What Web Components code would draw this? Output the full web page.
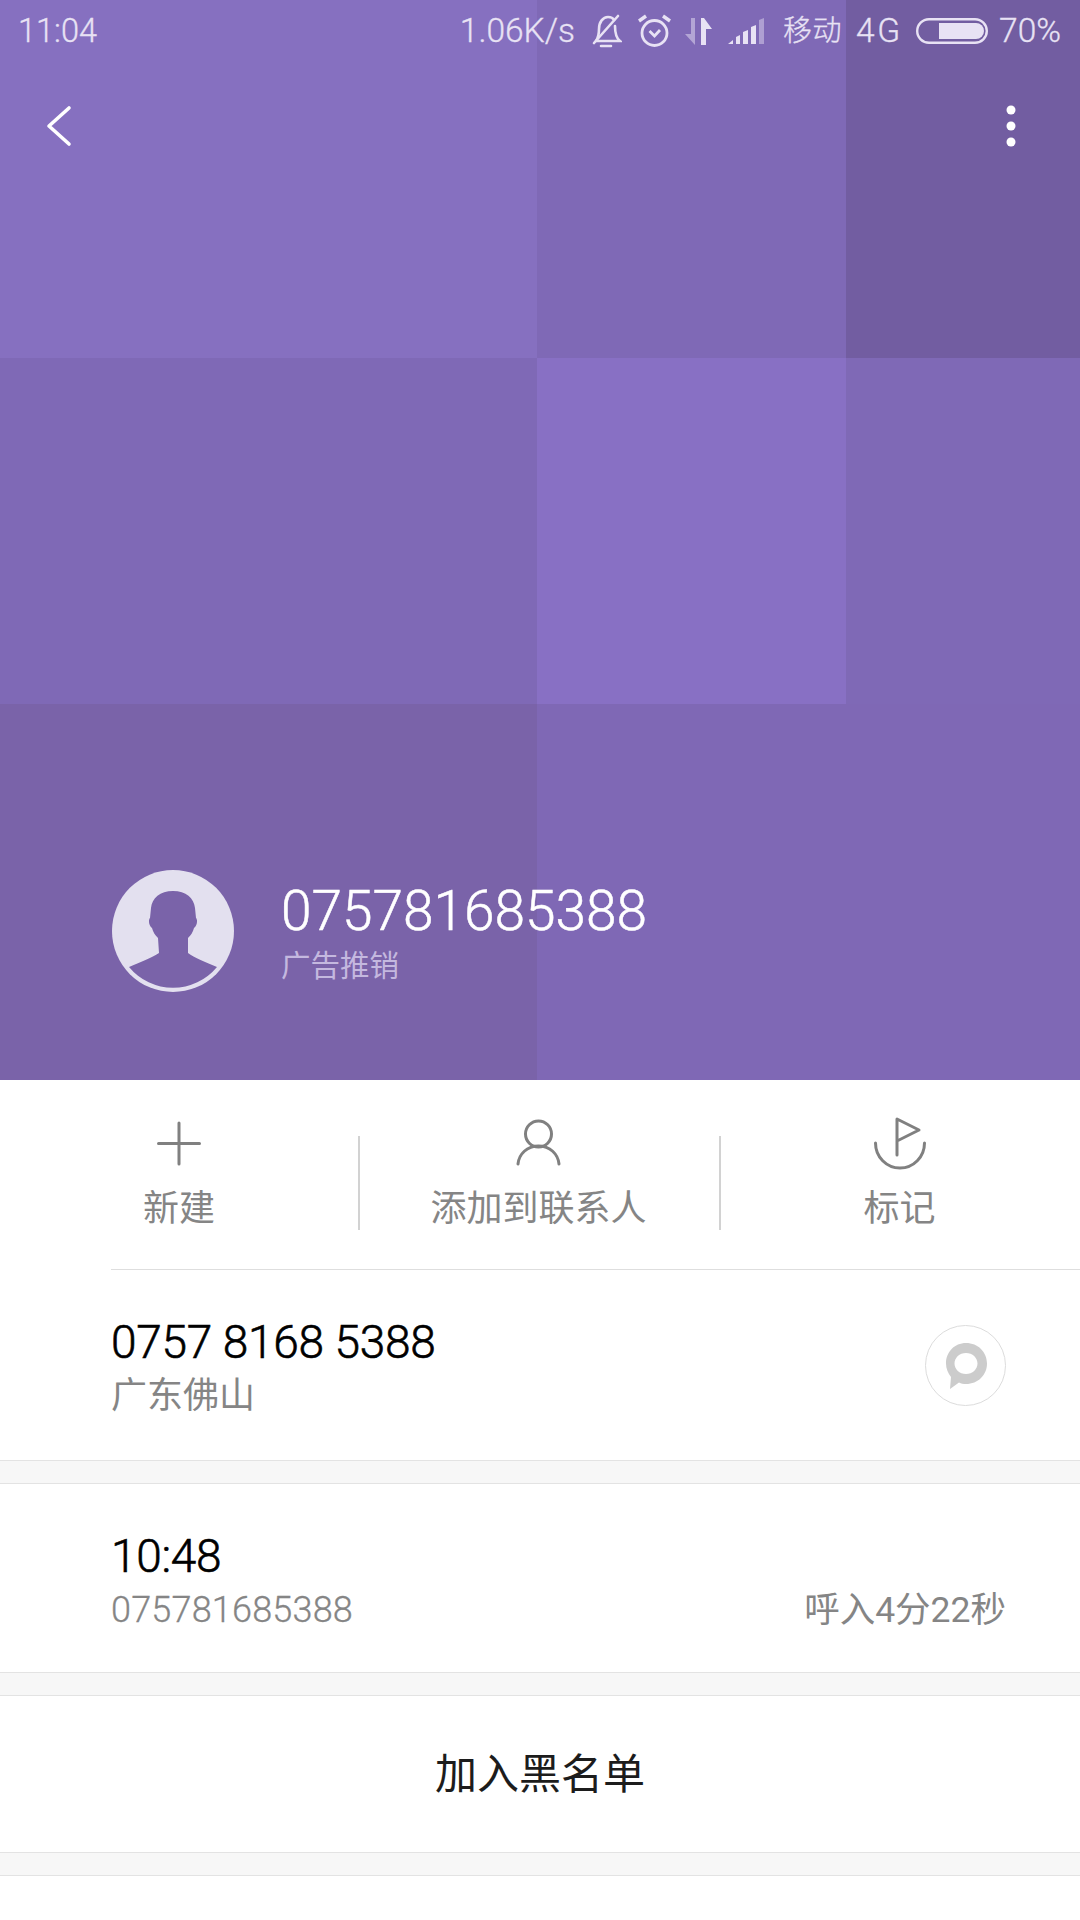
<!DOCTYPE html>
<html lang="zh">
<head>
<meta charset="utf-8">
<title>call detail</title>
<style>
  html, body { margin: 0; padding: 0; background: #fff; }
  body { width: 1080px; height: 1920px; overflow: hidden; font-family: Roboto, "Noto Sans CJK SC", sans-serif; }
</style>
</head>
<body>
<call-hero number="075781685388" tag="广告推销"></call-hero>
<action-bar></action-bar>
<info-row style="height:190px">
  <span slot="title">0757 8168 5388</span>
  <span slot="sub">广东佛山</span>
  <chat-button slot="side"></chat-button>
</info-row>
<band-gap></band-gap>
<info-row style="height:188px">
  <span slot="title">10:48</span>
  <span slot="sub" style="font-weight:300;letter-spacing:.2px;-webkit-text-stroke:.3px #858585">075781685388</span>
  <span slot="side-text">呼入4分22秒</span>
</info-row>
<band-gap></band-gap>
<block-row>加入黑名单</block-row>
<band-gap></band-gap>

<script>
const FONT = `Roboto, "Noto Sans CJK SC", sans-serif`;

class StatusBar extends HTMLElement {
  constructor() {
    super();
    this.attachShadow({ mode: "open" });
    this.shadowRoot.innerHTML = /* html */`
    <style>
      :host {
        display: flex;
        align-items: center;
        height: 62px;
        padding: 0 19px 0 18px;
        box-sizing: border-box;
        color: #e8e2f4;
        font: 300 33.500px/62px ${FONT};
        -webkit-text-stroke: .3px #e8e2f4;
      }
      .time { margin-right: auto; font-size: 32.500px; }
      svg { display: block; fill: none; stroke: currentColor; }
      .cn { font-size: 29px; letter-spacing: .5px; }
    </style>
    <span class="time">11:04</span>
    <span style="margin-right:15px">1.06K/s</span>
    <svg width="32" height="34" stroke-width="2.6" stroke-linecap="round" style="margin-right:16px">
      <path d="M6 27c2-3 3-6 3-12 0-7 4-12 9-12 3 0 5 1 6 3M25 12c0 6 1 12 5 15H6"/>
      <path d="M4 29 28 2M11 32h10"/>
    </svg>
    <svg width="33" height="34" stroke-width="2.8" style="margin-right:14px">
      <circle cx="16.500" cy="19" r="12.500"/>
      <path d="M11.500 17l5 5 5.500-6"/>
      <path d="M1 7l7-5M32 7l-7-5" stroke-width="3.400"/>
    </svg>
    <svg width="27" height="27" style="margin-right:16px;stroke:none;fill:currentColor">
      <path d="M6 0h4v27L0 16h6z" opacity=".5"/>
      <path d="M16 27V0h3l8 11h-6v16z"/>
    </svg>
    <svg width="37" height="27" style="margin-right:18px;stroke:none;fill:currentColor">
      <path d="M0 26 5 22v4zM8 26V19l4-2v9zM15 26V14l5-2v14zM23 26V9l5-2v19z"/>
      <path d="M31 26V2l5-2v26z" opacity=".45"/>
    </svg>
    <span class="cn" style="margin-right:14px">移动</span>
    <span style="margin-right:13.500px;letter-spacing:2.500px">4G</span>
    <svg width="72" height="26" stroke-width="2.4" style="margin-right:11px">
      <rect x="1.200" y="1.200" width="69.600" height="23.600" rx="11.800"/>
      <path d="M23 5h37a8 8 0 0 1 0 16H23z" fill="currentColor" stroke="none"/>
    </svg>
    <span>70%</span>
    `;
  }
}
customElements.define("status-bar", StatusBar);

class CallHero extends HTMLElement {
  constructor() {
    super();
    this.attachShadow({ mode: "open" });
    const number = this.getAttribute("number");
    const tag = this.getAttribute("tag");
    this.shadowRoot.innerHTML = /* html */`
    <style>
      :host {
        display: block;
        position: relative;
        height: 1080px;
        color: #fff;
      }
      .tiles {
        position: absolute;
        inset: 0;
        display: grid;
        grid-template-columns: 537px 309px 234px;
        grid-template-rows: 358px 346px 376px;
      }
      .wide { grid-column: span 2; }
      .content {
        position: relative;
        height: 100%;
        display: flex;
        flex-direction: column;
      }
      .toolbar {
        display: flex;
        justify-content: space-between;
        align-items: center;
        height: 64px;
        margin-top: 32px;
        padding: 0 64px 0 46px;
      }
      .toolbar svg { display: block; }
      .contact {
        margin-top: auto;
        display: flex;
        align-items: flex-start;
        padding: 0 0 88px 112px;
      }
      .avatar { display: block; margin-right: 47px; }
      .number {
        font: 300 55px/58px ${FONT};
        -webkit-text-stroke: .5px #fff;
        margin-top: 12px;
      }
      .tag {
        font: 400 29.500px/36px ${FONT};
        color: #c4b8df;
        margin-top: 8px;
      }
    </style>
    <div class="tiles">
      <div style="background:#8670c0"></div>
      <div style="background:#7f69b6"></div>
      <div style="background:#725da1"></div>
      <div style="background:#7f69b6"></div>
      <div style="background:#8870c4"></div>
      <div style="background:#7f69b6"></div>
      <div style="background:#7a63a9"></div>
      <div class="wide" style="background:#7f68b5"></div>
    </div>
    <div class="content">
      <status-bar></status-bar>
      <div class="toolbar">
        <svg width="28" height="42" fill="none" stroke="#fff" stroke-width="3.600" stroke-linecap="round" stroke-linejoin="round">
          <path d="M23 3 3 21l20 18"/>
        </svg>
        <svg width="10" height="42" fill="#fff">
          <circle cx="5" cy="5" r="4.500"/><circle cx="5" cy="21" r="4.500"/><circle cx="5" cy="37" r="4.500"/>
        </svg>
      </div>
      <div class="contact">
        <svg class="avatar" width="122" height="122" viewBox="0 0 122 122">
          <circle cx="61" cy="61" r="61" fill="#e3e0ef"/>
          <path fill="#7a63a9" d="M61 21C48 21 40 28 39 38L38 48C36 50 37 56 40 58C41 62 43 65 46 68L47 83C40 88 28 92 17 97A57 57 0 0 0 105 97C94 92 82 88 76 83L76 68C79 65 81 62 82 58C85 56 86 50 84 48L83 38C82 28 74 21 61 21Z"/>
        </svg>
        <div>
          <div class="number">${number}</div>
          <div class="tag">${tag}</div>
        </div>
      </div>
    </div>
    `;
  }
}
customElements.define("call-hero", CallHero);

class ActionItem extends HTMLElement {
  constructor() {
    super();
    this.attachShadow({ mode: "open" });
    this.shadowRoot.innerHTML = /* html */`
    <style>
      :host {
        display: flex;
        flex-direction: column;
        align-items: center;
        padding-top: 37px;
        color: #858585;
        font: 400 36px/50px ${FONT};
      }
      ::slotted(svg) { display: block; width: 54px; height: 54px; margin-bottom: 13px; }
    </style>
    <slot name="icon"></slot>
    <slot></slot>
    `;
  }
}
customElements.define("action-item", ActionItem);

class ActionBar extends HTMLElement {
  constructor() {
    super();
    this.attachShadow({ mode: "open" });
    this.shadowRoot.innerHTML = /* html */`
    <style>
      :host { display: block; height: 190px; }
      .inner {
        display: grid;
        grid-template-columns: 358px 2px 359px 2px 359px;
        height: 189px;
      }
      .nudge { padding-right: 2px; }
      .sep { height: 94px; margin-top: 56px; background: #d2d2d2; }
      .line { height: 1px; margin-left: 111px; background: #dedede; }
      svg { fill: none; stroke: #808080; stroke-width: 3; stroke-linecap: round; stroke-linejoin: round; }
    </style>
    <div class="inner">
      <action-item>
        <svg slot="icon" viewBox="0 0 54 54"><path d="M27 6v41M6.500 26.500h41"/></svg>
        新建
      </action-item>
      <div class="sep"></div>
      <action-item class="nudge">
        <svg slot="icon" viewBox="0 0 54 54"><circle cx="26.500" cy="17" r="13"/><path d="M6 47c1-10 9-18 20.500-18S46 37 47 47"/></svg>
        添加到联系人
      </action-item>
      <div class="sep"></div>
      <action-item class="nudge">
        <svg slot="icon" viewBox="0 0 54 54"><path d="M24 38V2l22 11-22 11"/><path d="M2.500 26c0 14 11 25 24.500 25s24.500-11 24.500-25"/></svg>
        标记
      </action-item>
    </div>
    <div class="line"></div>
    `;
  }
}
customElements.define("action-bar", ActionBar);

class ChatButton extends HTMLElement {
  constructor() {
    super();
    this.attachShadow({ mode: "open" });
    this.shadowRoot.innerHTML = /* html */`
    <style>
      :host { display: block; width: 81px; height: 81px; }
      svg { display: block; }
    </style>
    <svg width="81" height="81">
      <circle cx="40.500" cy="40.500" r="40" fill="#fff" stroke="#dcdcdc"/>
      <path fill="#cccccc" fill-rule="evenodd" d="M41 18c12 0 21 9 21 20.500S53 59 41 59c-2.500 0-5-.500-7-1.500L25 64l1-12c-3-3.800-5-8.500-5-13.500C21 27 29.500 18 41 18zm0 10c-6.500 0-11.500 4.800-11.500 10.500S34.500 49 41 49s11.500-4.800 11.500-10.500S47.500 28 41 28z"/>
    </svg>
    `;
  }
}
customElements.define("chat-button", ChatButton);

class InfoRow extends HTMLElement {
  constructor() {
    super();
    this.attachShadow({ mode: "open" });
    this.shadowRoot.innerHTML = /* html */`
    <style>
      :host {
        display: flex;
        height: 189px;
        box-sizing: border-box;
        padding: 42px 74px 0 111px;
        background: #fff;
      }
      .main { flex: 1; }
      .title { color: #000; font: 300 46px/60px ${FONT}; letter-spacing: -.3px; -webkit-text-stroke: .6px #000; }
      .sub { color: #858585; font: 400 36px/48px ${FONT}; }
      ::slotted(chat-button) { margin-top: 13px; }
      .side-text { color: #858585; font: 400 35.500px/48px ${FONT}; align-self: flex-start; margin-top: 60px; }
    </style>
    <div class="main">
      <div class="title"><slot name="title"></slot></div>
      <div class="sub"><slot name="sub"></slot></div>
    </div>
    <slot name="side"></slot>
    <div class="side-text"><slot name="side-text"></slot></div>
    `;
  }
}
customElements.define("info-row", InfoRow);

class BandGap extends HTMLElement {
  constructor() {
    super();
    this.attachShadow({ mode: "open" });
    this.shadowRoot.innerHTML = /* html */`
    <style>
      :host {
        display: block;
        height: 24px;
        box-sizing: border-box;
        background: #f7f7f7;
        border-top: 1px solid #e3e3e3;
        border-bottom: 1px solid #e3e3e3;
      }
    </style>
    `;
  }
}
customElements.define("band-gap", BandGap);

class BlockRow extends HTMLElement {
  constructor() {
    super();
    this.attachShadow({ mode: "open" });
    this.shadowRoot.innerHTML = /* html */`
    <style>
      :host {
        display: flex;
        align-items: center;
        justify-content: center;
        height: 156px;
        padding-top: 1px;
        box-sizing: border-box;
        background: #fff;
        color: #1c1c1c;
        font: 400 42px/60px ${FONT};
      }
    </style>
    <slot></slot>
    `;
  }
}
customElements.define("block-row", BlockRow);
</script>
</body>
</html>
